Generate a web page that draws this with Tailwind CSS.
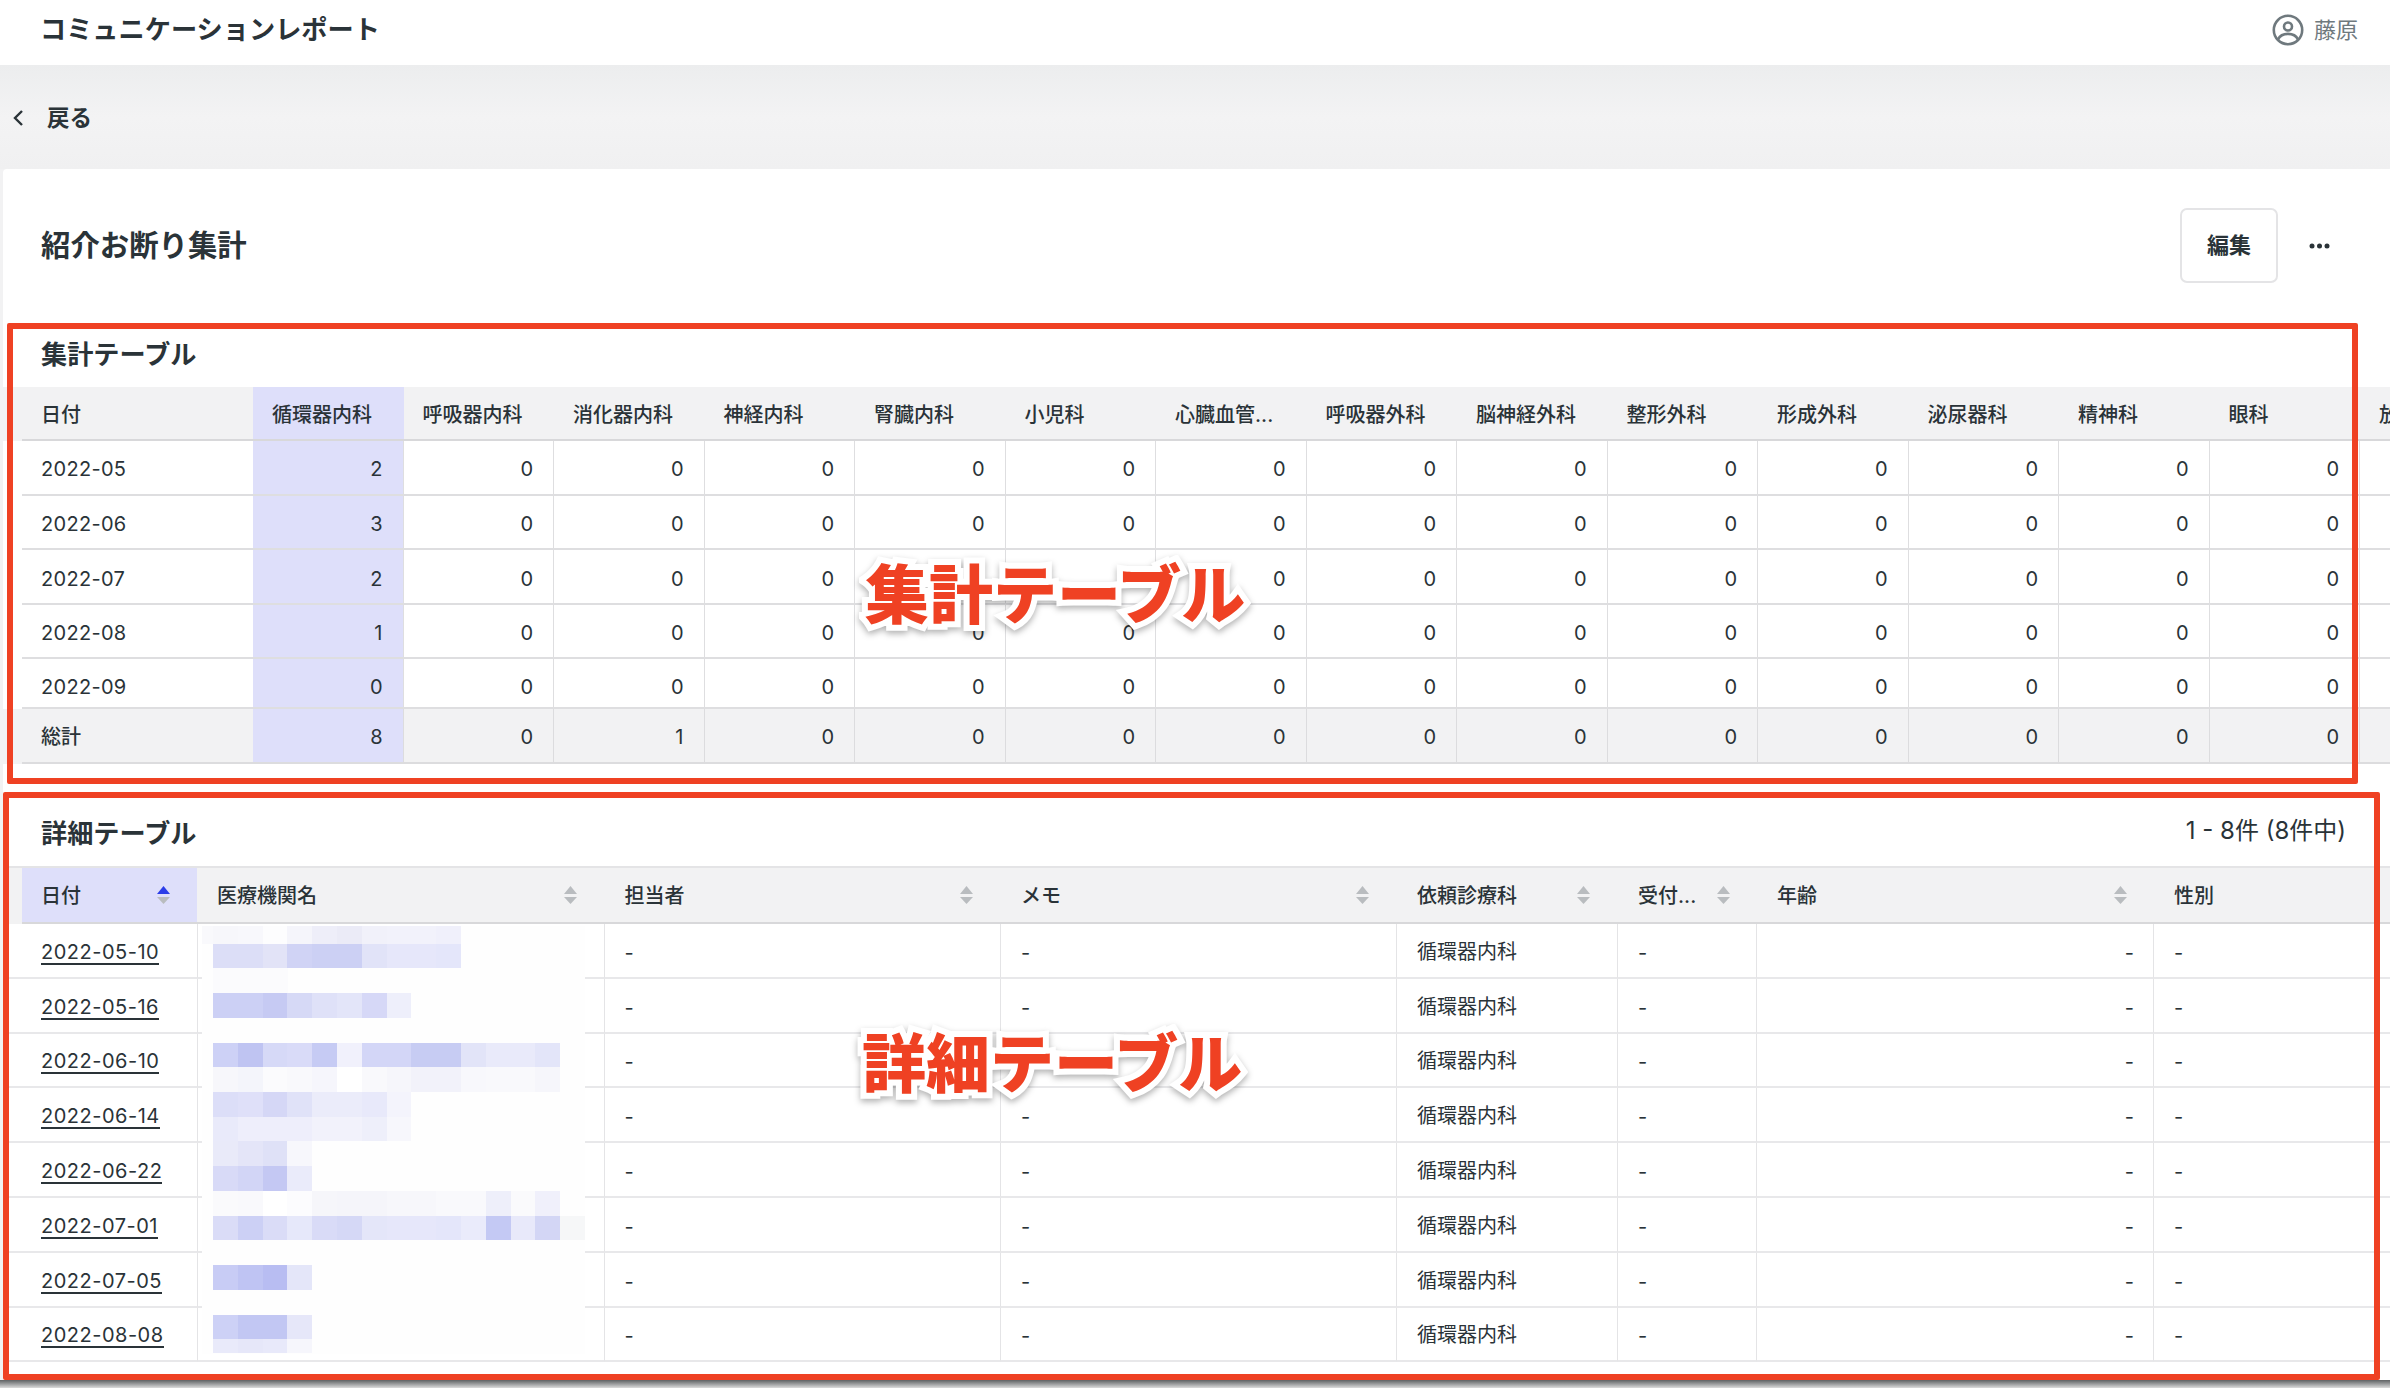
<!DOCTYPE html>
<html lang="ja">
<head>
<meta charset="utf-8">
<title>コミュニケーションレポート</title>
<script src="https://cdn.jsdelivr.net/npm/@tailwindcss/browser@4"></script>
</head>
<body class="font-['Inter','Noto_Sans_CJK_JP',sans-serif] text-[#2a3338]">
<div class="relative w-[2390px] h-[1388px] overflow-hidden bg-[#f2f2f3]">

  <!-- top bar -->
  <header class="h-[65px] bg-white flex items-center justify-between pl-[40px] pr-[32px]">
    <h1 class="text-[26.2px] leading-none font-semibold -mt-[5px]">コミュニケーションレポート</h1>
    <div class="flex items-center gap-[10px] text-[#6f797e] text-[22px] -mt-[5px]">
      <svg width="32" height="32" viewBox="0 0 32 32" fill="none" stroke="#6f797e" stroke-width="2.6">
        <circle cx="16" cy="16" r="14.2"/>
        <circle cx="16" cy="12.5" r="4"/>
        <path d="M6 25.5c2-4.2 6-5.6 10-5.6s8 1.4 10 5.6"/>
      </svg>
      <span>藤原</span>
    </div>
  </header>

  <!-- back bar -->
  <nav class="h-[104px] flex items-center pl-[12px] gap-[23px] bg-gradient-to-b from-[#ecedee] via-[#f3f3f4] to-[#f0f0f1]">
    <svg width="12" height="20" viewBox="0 0 12 20" fill="none" stroke="#2a3338" stroke-width="2.4" class="mt-[1px]"><path d="M10 3 3 10l7 7"/></svg>
    <span class="text-[22.5px] font-semibold pt-[2px]">戻る</span>
  </nav>

  <!-- card -->
  <main class="ml-[3px] bg-white rounded-tl-[4px] h-[1211px]">
    <div class="h-[114px] pt-[39px] pl-[38px] pr-[60px] flex items-start justify-between">
      <h2 class="text-[29.4px] leading-[76px] font-semibold">紹介お断り集計</h2>
      <div class="flex items-center gap-[31px]">
        <button class="w-[98px] h-[75px] border-2 border-[#e4e4e6] rounded-[7px] text-[22px] font-semibold bg-white">編集</button>
        <svg width="21" height="6" viewBox="0 0 21 6" fill="#2a3338"><circle cx="3" cy="3" r="2.5"/><circle cx="10.5" cy="3" r="2.5"/><circle cx="18" cy="3" r="2.5"/></svg>
      </div>
    </div>

    <div class="h-[104px] pl-[38px] flex items-end pb-[19px]">
      <h3 class="text-[26.2px] leading-[26px] font-semibold">集計テーブル</h3>
    </div>

    <!-- summary table -->
    <div class="text-[20px] w-[2387px] overflow-hidden">
      <div class="flex h-[54px] bg-[#f2f2f3] pl-[19px] font-medium *:shrink-0 *:pl-[19px] *:pt-[3px] *:flex *:items-center *:border-b-2 *:border-[#d8d8da]">
        <div class="w-[231px]">日付</div>
        <div class="w-[150.5px] bg-[#dedffa]">循環器内科</div>
        <div class="w-[150.5px]">呼吸器内科</div>
        <div class="w-[150.5px]">消化器内科</div>
        <div class="w-[150.5px]">神経内科</div>
        <div class="w-[150.5px]">腎臓内科</div>
        <div class="w-[150.5px]">小児科</div>
        <div class="w-[150.5px]">心臓血管...</div>
        <div class="w-[150.5px]">呼吸器外科</div>
        <div class="w-[150.5px]">脳神経外科</div>
        <div class="w-[150.5px]">整形外科</div>
        <div class="w-[150.5px]">形成外科</div>
        <div class="w-[150.5px]">泌尿器科</div>
        <div class="w-[150.5px]">精神科</div>
        <div class="w-[150.5px]">眼科</div>
        <div class="w-[150.5px]">放射線科</div>
      </div>
      <div class="grid grid-cols-[19px_231px_repeat(15,150.5px)] h-[54.6px] *:border-b-2 *:border-[#dedee0] *:flex *:items-center *:justify-end *:pr-[20px] *:pt-[4px] *:border-r *:first:border-0 *:first:pr-0 *:nth-[2]:justify-start *:nth-[2]:pl-[19px] *:nth-[2]:border-r-0 *:nth-[2]:tracking-[0.3px] *:nth-[3]:bg-[#dedffa]">
        <div class="!border-0"></div><div>2022-05</div><div>2</div><div>0</div><div>0</div><div>0</div><div>0</div><div>0</div><div>0</div><div>0</div><div>0</div><div>0</div><div>0</div><div>0</div><div>0</div><div>0</div><div>0</div>
      </div>
      <div class="grid grid-cols-[19px_231px_repeat(15,150.5px)] h-[54.6px] *:border-b-2 *:border-[#dedee0] *:flex *:items-center *:justify-end *:pr-[20px] *:pt-[5px] *:border-r *:first:border-0 *:first:pr-0 *:nth-[2]:justify-start *:nth-[2]:pl-[19px] *:nth-[2]:border-r-0 *:nth-[2]:tracking-[0.3px] *:nth-[3]:bg-[#dedffa]">
        <div class="!border-0"></div><div>2022-06</div><div>3</div><div>0</div><div>0</div><div>0</div><div>0</div><div>0</div><div>0</div><div>0</div><div>0</div><div>0</div><div>0</div><div>0</div><div>0</div><div>0</div><div>0</div>
      </div>
      <div class="grid grid-cols-[19px_231px_repeat(15,150.5px)] h-[54.6px] *:border-b-2 *:border-[#dedee0] *:flex *:items-center *:justify-end *:pr-[20px] *:pt-[5px] *:border-r *:first:border-0 *:first:pr-0 *:nth-[2]:justify-start *:nth-[2]:pl-[19px] *:nth-[2]:border-r-0 *:nth-[2]:tracking-[0.3px] *:nth-[3]:bg-[#dedffa]">
        <div class="!border-0"></div><div>2022-07</div><div>2</div><div>0</div><div>0</div><div>0</div><div>0</div><div>0</div><div>0</div><div>0</div><div>0</div><div>0</div><div>0</div><div>0</div><div>0</div><div>0</div><div>0</div>
      </div>
      <div class="grid grid-cols-[19px_231px_repeat(15,150.5px)] h-[54.6px] *:border-b-2 *:border-[#dedee0] *:flex *:items-center *:justify-end *:pr-[20px] *:pt-[4px] *:border-r *:first:border-0 *:first:pr-0 *:nth-[2]:justify-start *:nth-[2]:pl-[19px] *:nth-[2]:border-r-0 *:nth-[2]:tracking-[0.3px] *:nth-[3]:bg-[#dedffa]">
        <div class="!border-0"></div><div>2022-08</div><div>1</div><div>0</div><div>0</div><div>0</div><div>0</div><div>0</div><div>0</div><div>0</div><div>0</div><div>0</div><div>0</div><div>0</div><div>0</div><div>0</div><div>0</div>
      </div>
      <div class="grid grid-cols-[19px_231px_repeat(15,150.5px)] h-[49.6px] *:border-b-2 *:border-[#dedee0] *:flex *:items-center *:justify-end *:pr-[20px] *:pt-[7px] *:border-r *:first:border-0 *:first:pr-0 *:nth-[2]:justify-start *:nth-[2]:pl-[19px] *:nth-[2]:border-r-0 *:nth-[2]:tracking-[0.3px] *:nth-[3]:bg-[#dedffa]">
        <div class="!border-0"></div><div>2022-09</div><div>0</div><div>0</div><div>0</div><div>0</div><div>0</div><div>0</div><div>0</div><div>0</div><div>0</div><div>0</div><div>0</div><div>0</div><div>0</div><div>0</div><div>0</div>
      </div>
      <div class="grid grid-cols-[19px_231px_repeat(15,150.5px)] h-[55px] bg-[#f2f2f3] *:border-b-2 *:border-[#dcdcde] *:flex *:items-center *:justify-end *:pr-[20px] *:pt-[4px] *:border-r *:first:border-0 *:first:pr-0 *:nth-[2]:justify-start *:nth-[2]:pl-[19px] *:nth-[2]:border-r-0 *:nth-[2]:font-medium *:nth-[3]:bg-[#dedffa]">
        <div class="!border-0"></div><div>総計</div><div>8</div><div>0</div><div>1</div><div>0</div><div>0</div><div>0</div><div>0</div><div>0</div><div>0</div><div>0</div><div>0</div><div>0</div><div>0</div><div>0</div><div>0</div>
      </div>
    </div>

    <!-- detail heading -->
    <div class="h-[102px] pl-[38px] pr-[44px] flex items-end justify-between pb-[19px]">
      <h3 class="text-[26.2px] leading-[26px] font-semibold">詳細テーブル</h3>
      <span class="text-[24px] leading-[24px] mb-[4px]">1 - 8件 (8件中)</span>
    </div>

    <!-- detail table -->
    <div class="text-[20px] w-[2387px] overflow-hidden">
      <div class="flex h-[58px] bg-[#f2f2f3] pl-[19px] font-medium border-t-2 border-[#e4e4e6] *:shrink-0 *:flex *:items-center *:justify-between *:border-b-2 *:border-[#d8d8da] [&>*>span]:pt-[3px]">
        <div class="w-[175px] pl-[19px] pr-[27px] bg-[#dedffa]">
          <span>日付</span>
          <svg width="13" height="18" viewBox="0 0 13 18"><path d="M6.5 0 13 8H0z" fill="#2b3de8"/><path d="M6.5 18 0 11h13z" fill="#b9bcbf"/></svg>
        </div>
        <div class="w-[407.5px] pl-[20px] pr-[28px]">
          <span>医療機関名</span>
          <svg width="13" height="18" viewBox="0 0 13 18" fill="#b9bcbf"><path d="M6.5 0 13 8H0z"/><path d="M6.5 18 0 11h13z"/></svg>
        </div>
        <div class="w-[396.5px] pl-[20px] pr-[28px]">
          <span>担当者</span>
          <svg width="13" height="18" viewBox="0 0 13 18" fill="#b9bcbf"><path d="M6.5 0 13 8H0z"/><path d="M6.5 18 0 11h13z"/></svg>
        </div>
        <div class="w-[396px] pl-[20px] pr-[28px]">
          <span>メモ</span>
          <svg width="13" height="18" viewBox="0 0 13 18" fill="#b9bcbf"><path d="M6.5 0 13 8H0z"/><path d="M6.5 18 0 11h13z"/></svg>
        </div>
        <div class="w-[221px] pl-[20px] pr-[28px]">
          <span>依頼診療科</span>
          <svg width="13" height="18" viewBox="0 0 13 18" fill="#b9bcbf"><path d="M6.5 0 13 8H0z"/><path d="M6.5 18 0 11h13z"/></svg>
        </div>
        <div class="w-[139px] pl-[20px] pr-[27px]">
          <span>受付...</span>
          <svg width="13" height="18" viewBox="0 0 13 18" fill="#b9bcbf"><path d="M6.5 0 13 8H0z"/><path d="M6.5 18 0 11h13z"/></svg>
        </div>
        <div class="w-[397px] pl-[20px] pr-[27px]">
          <span>年齢</span>
          <svg width="13" height="18" viewBox="0 0 13 18" fill="#b9bcbf"><path d="M6.5 0 13 8H0z"/><path d="M6.5 18 0 11h13z"/></svg>
        </div>
        <div class="!shrink flex-1 pl-[20px]"><span>性別</span></div>
      </div>

      <div class="grid grid-cols-[19px_175px_407.5px_396.5px_396px_221px_139px_397px_1fr] h-[54.8px] *:border-b-2 *:border-[#e8e8ea] *:flex *:items-center *:pl-[20px] *:pt-[5px] *:border-r *:border-r-[#e4e4e6]">
        <div class="!border-r-0 !pl-0"></div><div class="!border-r-0 !pl-[19px]"><a class="border-b-2 border-[#2a3338] leading-[22px] tracking-[0.5px]">2022-05-10</a></div><div class="!border-l !border-l-[#e4e4e6]"></div><div>-</div><div>-</div><div class="!pt-[3px]">循環器内科</div><div>-</div><div class="justify-end pr-[19px]">-</div><div class="!border-r-0">-</div>
      </div>
      <div class="grid grid-cols-[19px_175px_407.5px_396.5px_396px_221px_139px_397px_1fr] h-[54.8px] *:border-b-2 *:border-[#e8e8ea] *:flex *:items-center *:pl-[20px] *:pt-[5px] *:border-r *:border-r-[#e4e4e6]">
        <div class="!border-r-0 !pl-0"></div><div class="!border-r-0 !pl-[19px]"><a class="border-b-2 border-[#2a3338] leading-[22px] tracking-[0.5px]">2022-05-16</a></div><div class="!border-l !border-l-[#e4e4e6]"></div><div>-</div><div>-</div><div class="!pt-[3px]">循環器内科</div><div>-</div><div class="justify-end pr-[19px]">-</div><div class="!border-r-0">-</div>
      </div>
      <div class="grid grid-cols-[19px_175px_407.5px_396.5px_396px_221px_139px_397px_1fr] h-[54.8px] *:border-b-2 *:border-[#e8e8ea] *:flex *:items-center *:pl-[20px] *:pt-[5px] *:border-r *:border-r-[#e4e4e6]">
        <div class="!border-r-0 !pl-0"></div><div class="!border-r-0 !pl-[19px]"><a class="border-b-2 border-[#2a3338] leading-[22px] tracking-[0.5px]">2022-06-10</a></div><div class="!border-l !border-l-[#e4e4e6]"></div><div>-</div><div>-</div><div class="!pt-[3px]">循環器内科</div><div>-</div><div class="justify-end pr-[19px]">-</div><div class="!border-r-0">-</div>
      </div>
      <div class="grid grid-cols-[19px_175px_407.5px_396.5px_396px_221px_139px_397px_1fr] h-[54.8px] *:border-b-2 *:border-[#e8e8ea] *:flex *:items-center *:pl-[20px] *:pt-[5px] *:border-r *:border-r-[#e4e4e6]">
        <div class="!border-r-0 !pl-0"></div><div class="!border-r-0 !pl-[19px]"><a class="border-b-2 border-[#2a3338] leading-[22px] tracking-[0.5px]">2022-06-14</a></div><div class="!border-l !border-l-[#e4e4e6]"></div><div>-</div><div>-</div><div class="!pt-[3px]">循環器内科</div><div>-</div><div class="justify-end pr-[19px]">-</div><div class="!border-r-0">-</div>
      </div>
      <div class="grid grid-cols-[19px_175px_407.5px_396.5px_396px_221px_139px_397px_1fr] h-[54.8px] *:border-b-2 *:border-[#e8e8ea] *:flex *:items-center *:pl-[20px] *:pt-[5px] *:border-r *:border-r-[#e4e4e6]">
        <div class="!border-r-0 !pl-0"></div><div class="!border-r-0 !pl-[19px]"><a class="border-b-2 border-[#2a3338] leading-[22px] tracking-[0.5px]">2022-06-22</a></div><div class="!border-l !border-l-[#e4e4e6]"></div><div>-</div><div>-</div><div class="!pt-[3px]">循環器内科</div><div>-</div><div class="justify-end pr-[19px]">-</div><div class="!border-r-0">-</div>
      </div>
      <div class="grid grid-cols-[19px_175px_407.5px_396.5px_396px_221px_139px_397px_1fr] h-[54.8px] *:border-b-2 *:border-[#e8e8ea] *:flex *:items-center *:pl-[20px] *:pt-[5px] *:border-r *:border-r-[#e4e4e6]">
        <div class="!border-r-0 !pl-0"></div><div class="!border-r-0 !pl-[19px]"><a class="border-b-2 border-[#2a3338] leading-[22px] tracking-[0.5px]">2022-07-01</a></div><div class="!border-l !border-l-[#e4e4e6]"></div><div>-</div><div>-</div><div class="!pt-[3px]">循環器内科</div><div>-</div><div class="justify-end pr-[19px]">-</div><div class="!border-r-0">-</div>
      </div>
      <div class="grid grid-cols-[19px_175px_407.5px_396.5px_396px_221px_139px_397px_1fr] h-[54.8px] *:border-b-2 *:border-[#e8e8ea] *:flex *:items-center *:pl-[20px] *:pt-[5px] *:border-r *:border-r-[#e4e4e6]">
        <div class="!border-r-0 !pl-0"></div><div class="!border-r-0 !pl-[19px]"><a class="border-b-2 border-[#2a3338] leading-[22px] tracking-[0.5px]">2022-07-05</a></div><div class="!border-l !border-l-[#e4e4e6]"></div><div>-</div><div>-</div><div class="!pt-[3px]">循環器内科</div><div>-</div><div class="justify-end pr-[19px]">-</div><div class="!border-r-0">-</div>
      </div>
      <div class="grid grid-cols-[19px_175px_407.5px_396.5px_396px_221px_139px_397px_1fr] h-[54.8px] *:border-b-2 *:border-[#e8e8ea] *:flex *:items-center *:pl-[20px] *:pt-[5px] *:border-r *:border-r-[#e4e4e6]">
        <div class="!border-r-0 !pl-0"></div><div class="!border-r-0 !pl-[19px]"><a class="border-b-2 border-[#2a3338] leading-[22px] tracking-[0.5px]">2022-08-08</a></div><div class="!border-l !border-l-[#e4e4e6]"></div><div>-</div><div>-</div><div class="!pt-[3px]">循環器内科</div><div>-</div><div class="justify-end pr-[19px]">-</div><div class="!border-r-0">-</div>
      </div>
    </div>
  </main>

  <!-- pixelated mosaic hiding the institution names -->
  <svg class="absolute left-[202px] top-[926px]" width="383" height="428" viewBox="202 926 383 428" shape-rendering="crispEdges">
    <rect x="202" y="926" width="383" height="428" fill="#fefefe"/>
    <rect x="202" y="926" width="11" height="18" fill="#f9f9fc"/><rect x="213" y="926" width="25" height="18" fill="#f7f7fb"/><rect x="238" y="926" width="25" height="18" fill="#f8f8fc"/><rect x="263" y="926" width="25" height="18" fill="#fdfdfe"/><rect x="287" y="926" width="25" height="18" fill="#f5f5fb"/><rect x="312" y="926" width="25" height="18" fill="#eeeef9"/><rect x="337" y="926" width="25" height="18" fill="#ebebf7"/><rect x="362" y="926" width="25" height="18" fill="#f1f1fa"/><rect x="387" y="926" width="25" height="18" fill="#f2f2fb"/><rect x="411" y="926" width="25" height="18" fill="#f2f2fb"/><rect x="436" y="926" width="25" height="18" fill="#f0f0fb"/>
    <rect x="213" y="944" width="25" height="24" fill="#dcdef7"/><rect x="238" y="944" width="25" height="24" fill="#dcdef7"/><rect x="263" y="944" width="25" height="24" fill="#e2e3f7"/><rect x="287" y="944" width="25" height="24" fill="#d0d3f5"/><rect x="312" y="944" width="25" height="24" fill="#ccd0f4"/><rect x="337" y="944" width="25" height="24" fill="#ccd0f4"/><rect x="362" y="944" width="25" height="24" fill="#e1e3f8"/><rect x="387" y="944" width="25" height="24" fill="#e6e7fa"/><rect x="411" y="944" width="25" height="24" fill="#e6e7fa"/><rect x="436" y="944" width="25" height="24" fill="#e4e6fa"/>
    <rect x="213" y="968" width="75" height="25" fill="#fbfbfd"/>
    <rect x="213" y="993" width="25" height="25" fill="#ccd0f5"/><rect x="238" y="993" width="25" height="25" fill="#ccd0f5"/><rect x="263" y="993" width="25" height="25" fill="#c6caf3"/><rect x="287" y="993" width="25" height="25" fill="#d6d9f6"/><rect x="312" y="993" width="25" height="25" fill="#dfe1f8"/><rect x="337" y="993" width="25" height="25" fill="#e3e5f9"/><rect x="362" y="993" width="25" height="25" fill="#d6d8f7"/><rect x="387" y="993" width="24" height="25" fill="#eeeffb"/>
    <rect x="213" y="1043" width="25" height="24" fill="#cdd1f6"/><rect x="238" y="1043" width="25" height="24" fill="#bfc4f2"/><rect x="263" y="1043" width="25" height="24" fill="#d6d9f7"/><rect x="287" y="1043" width="25" height="24" fill="#d9dbf8"/><rect x="312" y="1043" width="25" height="24" fill="#c6cbf4"/><rect x="337" y="1043" width="25" height="24" fill="#f1f1fc"/><rect x="362" y="1043" width="25" height="24" fill="#d3d6f7"/><rect x="387" y="1043" width="25" height="24" fill="#d3d6f7"/><rect x="411" y="1043" width="25" height="24" fill="#c7ccf3"/><rect x="436" y="1043" width="25" height="24" fill="#c7ccf3"/><rect x="461" y="1043" width="25" height="24" fill="#e2e4f8"/><rect x="486" y="1043" width="25" height="24" fill="#e9eafa"/><rect x="511" y="1043" width="25" height="24" fill="#e9eafa"/><rect x="535" y="1043" width="25" height="24" fill="#e3e5f9"/>
    <rect x="213" y="1067" width="25" height="25" fill="#f7f7fb"/><rect x="238" y="1067" width="25" height="25" fill="#f4f5fb"/><rect x="263" y="1067" width="25" height="25" fill="#fbfbfd"/><rect x="287" y="1067" width="25" height="25" fill="#f9f9fc"/><rect x="312" y="1067" width="25" height="25" fill="#f6f6fc"/><rect x="337" y="1067" width="25" height="25" fill="#ffffff"/><rect x="362" y="1067" width="25" height="25" fill="#f9f9fc"/><rect x="387" y="1067" width="25" height="25" fill="#f6f6fb"/><rect x="411" y="1067" width="25" height="25" fill="#f2f2fa"/><rect x="436" y="1067" width="25" height="25" fill="#f2f2fa"/><rect x="461" y="1067" width="25" height="25" fill="#f8f8fc"/><rect x="486" y="1067" width="25" height="25" fill="#f9f9fc"/><rect x="511" y="1067" width="25" height="25" fill="#f9f9fc"/><rect x="535" y="1067" width="25" height="25" fill="#f6f6fb"/>
    <rect x="213" y="1092" width="25" height="25" fill="#dcdef8"/><rect x="238" y="1092" width="25" height="25" fill="#dfe0f9"/><rect x="263" y="1092" width="25" height="25" fill="#d5d7f6"/><rect x="287" y="1092" width="25" height="25" fill="#e0e2f8"/><rect x="312" y="1092" width="25" height="25" fill="#ebecfa"/><rect x="337" y="1092" width="25" height="25" fill="#ebecfa"/><rect x="362" y="1092" width="25" height="25" fill="#e8e9fa"/><rect x="387" y="1092" width="24" height="25" fill="#f4f4fc"/>
    <rect x="213" y="1117" width="25" height="24" fill="#e9eafa"/><rect x="238" y="1117" width="25" height="24" fill="#eeeefb"/><rect x="263" y="1117" width="25" height="24" fill="#eeeefb"/><rect x="287" y="1117" width="25" height="24" fill="#eeeefb"/><rect x="312" y="1117" width="25" height="24" fill="#f2f2fb"/><rect x="337" y="1117" width="25" height="24" fill="#f2f2fb"/><rect x="362" y="1117" width="25" height="24" fill="#eeeffa"/><rect x="387" y="1117" width="24" height="24" fill="#f7f7fc"/>
    <rect x="213" y="1141" width="25" height="25" fill="#e9eaf9"/><rect x="238" y="1141" width="25" height="25" fill="#e4e5f8"/><rect x="263" y="1141" width="25" height="25" fill="#dfe1f7"/><rect x="287" y="1141" width="25" height="25" fill="#f7f7fc"/>
    <rect x="213" y="1166" width="25" height="25" fill="#d8daf7"/><rect x="238" y="1166" width="25" height="25" fill="#d2d5f6"/><rect x="263" y="1166" width="25" height="25" fill="#c4c8f3"/><rect x="287" y="1166" width="25" height="25" fill="#eaebfa"/>
    <rect x="213" y="1191" width="25" height="25" fill="#fafafc"/><rect x="238" y="1191" width="25" height="25" fill="#f9f9fc"/><rect x="263" y="1191" width="25" height="25" fill="#ffffff"/><rect x="287" y="1191" width="25" height="25" fill="#fcfcfe"/><rect x="312" y="1191" width="25" height="25" fill="#f6f6fa"/><rect x="337" y="1191" width="25" height="25" fill="#f5f5fa"/><rect x="362" y="1191" width="25" height="25" fill="#f5f5fa"/><rect x="387" y="1191" width="25" height="25" fill="#f7f7fb"/><rect x="411" y="1191" width="25" height="25" fill="#f7f7fb"/><rect x="436" y="1191" width="25" height="25" fill="#f9f9fc"/><rect x="461" y="1191" width="25" height="25" fill="#f9f9fc"/><rect x="486" y="1191" width="25" height="25" fill="#eeeffa"/><rect x="511" y="1191" width="25" height="25" fill="#fafafc"/><rect x="535" y="1191" width="25" height="25" fill="#f0f0fb"/>
    <rect x="213" y="1216" width="25" height="24" fill="#dadcf7"/><rect x="238" y="1216" width="25" height="24" fill="#ccd0f5"/><rect x="263" y="1216" width="25" height="24" fill="#dadcf7"/><rect x="287" y="1216" width="25" height="24" fill="#e6e8fa"/><rect x="312" y="1216" width="25" height="24" fill="#d9dbf7"/><rect x="337" y="1216" width="25" height="24" fill="#d5d8f6"/><rect x="362" y="1216" width="25" height="24" fill="#e4e6f9"/><rect x="387" y="1216" width="25" height="24" fill="#e6e7fa"/><rect x="411" y="1216" width="25" height="24" fill="#e6e7fa"/><rect x="436" y="1216" width="25" height="24" fill="#e4e6fa"/><rect x="461" y="1216" width="25" height="24" fill="#eaebfb"/><rect x="486" y="1216" width="25" height="24" fill="#c4c9f4"/><rect x="511" y="1216" width="25" height="24" fill="#e8e9fa"/><rect x="535" y="1216" width="25" height="24" fill="#d3d6f5"/><rect x="560" y="1216" width="25" height="24" fill="#f6f7f8"/>
    <rect x="213" y="1265" width="25" height="25" fill="#c8ccf5"/><rect x="238" y="1265" width="25" height="25" fill="#bfc4f3"/><rect x="263" y="1265" width="25" height="25" fill="#b8bdf2"/><rect x="287" y="1265" width="25" height="25" fill="#e4e6f9"/>
    <rect x="213" y="1315" width="25" height="24" fill="#cdd1f6"/><rect x="238" y="1315" width="25" height="24" fill="#c2c7f3"/><rect x="263" y="1315" width="25" height="24" fill="#c2c7f3"/><rect x="287" y="1315" width="25" height="24" fill="#e6e7f9"/>
    <rect x="213" y="1339" width="25" height="14" fill="#e9eafa"/><rect x="238" y="1339" width="25" height="14" fill="#e6e7f9"/><rect x="263" y="1339" width="25" height="14" fill="#e8e9fa"/><rect x="287" y="1339" width="25" height="14" fill="#f6f6fc"/>
  </svg>

  <!-- bottom window shadow -->
  <div class="absolute left-0 right-0 top-[1380px] h-[8px] bg-gradient-to-b from-[#5f6264] to-[#dcdcdc]"></div>

  <!-- annotations -->
  <div class="absolute left-[7px] top-[323px] w-[2351px] h-[461px] border-[6px] border-[#ef4123] rounded-[2px]"></div>
  <div class="absolute left-[3px] top-[792px] w-[2377px] h-[588px] border-[6px] border-[#ef4123] rounded-[2px]"></div>

  <div class="absolute left-[865px] top-[553px] text-[64px] leading-[84px] font-black text-[#ef4123] [-webkit-text-stroke:12px_white] [paint-order:stroke_fill] drop-shadow-[0_3px_3px_rgba(0,0,0,0.3)]">集計テーブル</div>
  <div class="absolute left-[862px] top-[1022px] text-[64px] leading-[84px] font-black text-[#ef4123] [-webkit-text-stroke:12px_white] [paint-order:stroke_fill] drop-shadow-[0_3px_3px_rgba(0,0,0,0.3)]">詳細テーブル</div>
</div>
</body>
</html>
